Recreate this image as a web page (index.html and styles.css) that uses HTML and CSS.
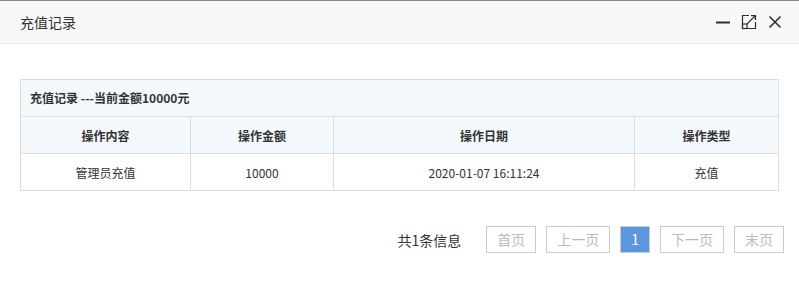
FILE: index.html
```html
<!DOCTYPE html>
<html lang="zh-CN">
<head>
    <meta charset="UTF-8">
    <title>充值记录</title>
    <link rel="stylesheet" href="styles.css">
</head>
<body>
    <div class="layer">
        <div class="layer-title">
            <span>充值记录</span>
            <div class="layer-tools">
                <svg class="tool" width="16" height="16" viewBox="0 0 16 16">
                    <path d="M1 8.5h14" stroke="#2e2e38" stroke-width="2"/>
                </svg>
                <svg class="tool" width="16" height="16" viewBox="0 0 16 16">
                    <path d="M8 1.5H1.5v13h13V8" fill="none" stroke="#2e2e38" stroke-width="1.2"/>
                    <path d="M10 1.5h4.5V6" fill="none" stroke="#2e2e38" stroke-width="1.2"/>
                    <rect x="1.5" y="10" width="4.5" height="4.5" fill="none" stroke="#2e2e38" stroke-width="1.2"/>
                    <path d="M6 10l8.3-8.3M10.5 1.6h3.9v3.9" fill="none" stroke="#2e2e38" stroke-width="1.2"/>
                </svg>
                <svg class="tool" width="16" height="16" viewBox="0 0 16 16">
                    <path d="M2.5 2.5l11 11M13.5 2.5l-11 11" stroke="#2e2e38" stroke-width="1.6"/>
                </svg>
            </div>
        </div>

        <div class="layer-content">
            <table class="record-table">
                <caption>充值记录 ---当前金额10000元</caption>
                <thead>
                    <tr>
                        <th class="c1">操作内容</th>
                        <th class="c2">操作金额</th>
                        <th class="c3">操作日期</th>
                        <th>操作类型</th>
                    </tr>
                </thead>
                <tbody>
                    <tr>
                        <td>管理员充值</td>
                        <td>10000</td>
                        <td>2020-01-07 16:11:24</td>
                        <td>充值</td>
                    </tr>
                </tbody>
            </table>

            <div class="pager">
                <span class="pager-info">共1条信息</span>
                <a class="page-btn">首页</a>
                <a class="page-btn">上一页</a>
                <a class="page-btn current">1</a>
                <a class="page-btn">下一页</a>
                <a class="page-btn">末页</a>
            </div>
        </div>
    </div>
</body>
</html>
```

FILE: styles.css
```css
body {
    margin: 0;
    font-family: "Noto Sans CJK SC", "Liberation Sans", sans-serif;
    color: #333;
    background-color: #fff;
}
.layer {
    border-top: 1px solid #888;
    height: 294px;
}
.layer-title {
    display: flex;
    align-items: center;
    justify-content: space-between;
    height: 42px;
    padding: 0 16px 0 20px;
    background-color: #f8f8f8;
    border-bottom: 1px solid #eee;
    font-size: 14px;
}
.layer-tools {
    display: flex;
    align-items: center;
    gap: 10px;
}
.tool {
    display: block;
}
.layer-content {
    padding: 35px 20px 0 20px;
}
.record-table {
    width: 100%;
    border-collapse: collapse;
    font-size: 12px;
}
.record-table caption {
    text-align: left;
    font-weight: bold;
    height: 36px;
    line-height: 36px;
    padding: 0 9px;
    background-color: #f4f9fe;
    border: 1px solid #ddd;
    border-bottom: none;
}
.record-table th,
.record-table td {
    height: 36px;
    padding: 0;
    border: 1px solid #ddd;
    text-align: center;
}
.record-table th {
    background-color: #f4f9fe;
    font-weight: bold;
}
.c1 {
    width: 169px;
}
.c2 {
    width: 142px;
}
.c3 {
    width: 300px;
}
.pager {
    display: flex;
    justify-content: flex-end;
    align-items: center;
    margin-top: 35px;
    margin-right: -5px;
    font-size: 14px;
}
.pager-info {
    margin-right: 15px;
}
.page-btn {
    display: inline-block;
    height: 25px;
    line-height: 25px;
    padding: 0 10px;
    margin-left: 10px;
    border: 1px solid #ccc;
    color: #bbb;
}
.page-btn.current {
    background-color: #5a98de;
    color: #fff;
}
```
